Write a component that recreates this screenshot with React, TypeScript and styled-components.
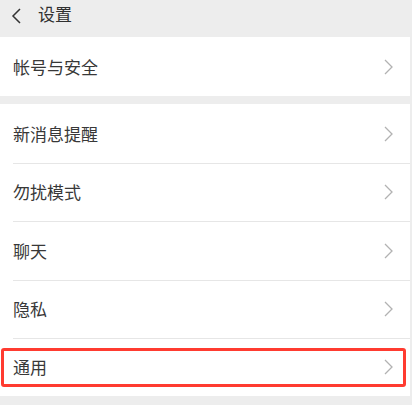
import React from 'react';
import styled, { createGlobalStyle } from 'styled-components';

const GlobalStyle = createGlobalStyle`
  html, body {
    margin: 0;
    padding: 0;
    background: #ededed;
  }
  body {
    font-family: "Noto Sans CJK SC", "Noto Sans", sans-serif;
    color: #353535;
  }
`;

const Page = styled.div`
  width: 412px;
  min-height: 405px;
  background: #ededed;
  overflow: hidden;
`;

const Header = styled.div`
  height: 37px;
  display: flex;
  align-items: flex-start;
  padding: 4px 0 0 11px;
  box-sizing: border-box;
  gap: 17px;
`;

const Title = styled.span`
  font-size: 17px;
  line-height: 20px;
  color: #303030;
`;

const Group = styled.div<{ $gap?: number }>`
  background: #fff;
  margin-right: 2px;
  margin-top: ${(p) => p.$gap ?? 0}px;
`;

const Row = styled.div<{ $divider?: boolean; $h?: number }>`
  position: relative;
  height: ${(p) => p.$h ?? 58}px;
  display: flex;
  align-items: center;
  justify-content: space-between;
  padding: 0 17px 0 13px;

  ${(p) =>
    p.$divider &&
    `
    &::before {
      content: '';
      position: absolute;
      top: 0;
      left: 13px;
      right: 0;
      height: 1px;
      background: #e6e6e6;
    }
  `}
`;

const Label = styled.span`
  font-size: 17px;
  line-height: 20px;
  color: #383838;
`;

const Highlight = styled.div`
  position: absolute;
  top: 10px;
  left: 1px;
  right: 4px;
  height: 39px;
  border: 3px solid #ff3b30;
  border-radius: 3px;
  box-sizing: border-box;
  pointer-events: none;
`;

const BackIcon = () => (
  <svg width="10" height="16" viewBox="0 0 10 16" style={{ marginTop: 4 }}>
    <polyline points="9,1 2,8 9,15" fill="none" stroke="#333" strokeWidth="1.5" />
  </svg>
);

const Chevron = () => (
  <svg width="9" height="16" viewBox="0 0 9 16">
    <polyline points="1,1 8,8 1,15" fill="none" stroke="#b2b2b2" strokeWidth="1.3" />
  </svg>
);

const items = [
  { name: '新消息提醒', h: 59 },
  { name: '勿扰模式', h: 58 },
  { name: '聊天', h: 59 },
  { name: '隐私', h: 58 },
  { name: '通用', h: 58 },
];

export default function App() {
  return (
    <Page>
      <GlobalStyle />
      <Header>
        <BackIcon />
        <Title>设置</Title>
      </Header>
      <Group>
        <Row $h={59}>
          <Label>帐号与安全</Label>
          <Chevron />
        </Row>
      </Group>
      <Group $gap={8}>
        {items.map((item, i) => (
          <Row key={item.name} $divider={i > 0} $h={item.h}>
            <Label>{item.name}</Label>
            <Chevron />
            {item.name === '通用' && <Highlight />}
          </Row>
        ))}
      </Group>
    </Page>
  );
}
